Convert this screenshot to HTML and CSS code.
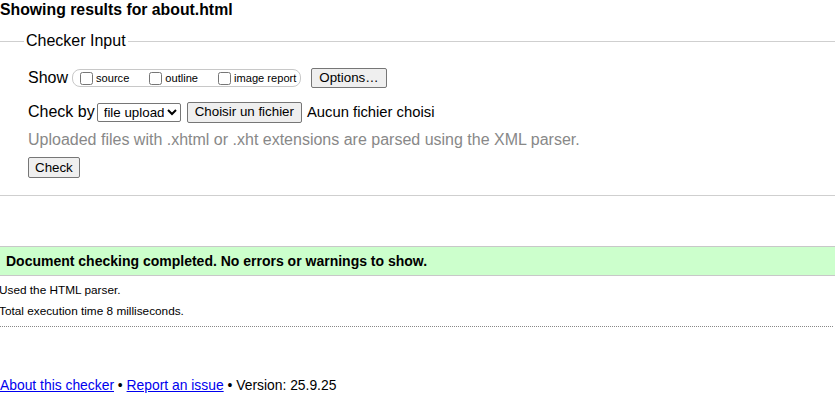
FILE: index.html
```html
<!DOCTYPE html>
<html lang="en">
<head>
<meta charset="utf-8">
<title>Showing results for about.html - Nu Html Checker</title>
<link rel="stylesheet" href="styles.css">
</head>
<body>
<h2 class="title">Showing results for about.html</h2>
<fieldset class="checker-input">
  <legend class="legend">Checker Input</legend>
  <div class="row row-show">
    <span class="label">Show</span>
    <span class="opts">
      <label class="opt"><input type="checkbox" class="cb"><span>source</span></label>
      <label class="opt"><input type="checkbox" class="cb"><span>outline</span></label>
      <label class="opt last"><input type="checkbox" class="cb"><span>image report</span></label>
    </span>
    <button type="button" class="btn btn-options">Options…</button>
  </div>
  <div class="row row-check">
    <span class="label">Check by</span>
    <select class="sel"><option>file upload</option></select>
    <button type="button" class="btn btn-file">Choisir un fichier</button>
    <span class="nofile">Aucun fichier choisi</span>
  </div>
  <p class="instruction">Uploaded files with .xhtml or .xht extensions are parsed using the XML parser.</p>
  <div class="row row-submit">
    <button type="button" class="btn btn-check">Check</button>
  </div>
</fieldset>
<div class="success">Document checking completed. No errors or warnings to show.</div>
<p class="details">Used the HTML parser.</p>
<p class="details">Total execution time 8 milliseconds.</p>
<hr class="sep">
<p class="footer"><a href="#">About this checker</a> • <a href="#">Report an issue</a> • Version: 25.9.25</p>
</body>
</html>
```
FILE: styles.css
```css
html, body {
  margin: 0;
  padding: 0;
  background: #fff;
}
body {
  font-family: "Liberation Sans", Arial, sans-serif;
  color: #000;
}
.title {
  margin: 0;
  font-size: 15.8px;
  line-height: 19px;
  font-weight: bold;
}
.checker-input {
  margin: 13px 0 0 0;
  padding: 0 0 17px 28px;
  border: 0;
  border-top: 1px solid #cfcfcf;
  border-bottom: 1px solid #cfcfcf;
  min-width: 0;
}
.legend {
  margin-left: -4px;
  padding: 0 2px;
  font-size: 16px;
  line-height: 18px;
}
.row {
  display: flex;
  align-items: center;
}
.label {
  font-size: 16px;
  line-height: 20px;
}
.row-show {
  margin-top: 18px;
  height: 20px;
}
.opts {
  display: inline-flex;
  align-items: center;
  margin-left: 4px;
  height: 16px;
  padding: 0 4px 0 7px;
  border: 1px solid #c8c8c8;
  border-radius: 8px;
}
.opt {
  display: inline-flex;
  align-items: center;
  font-size: 11.1px;
  margin-right: 20px;
}
.opt.last {
  margin-right: 0;
}
.cb {
  width: 13px;
  height: 13px;
  margin: 0 3px 0 0;
}
.btn {
  font-family: "Liberation Sans", Arial, sans-serif;
  font-size: 13.33px;
  line-height: 16px;
  color: #000;
  background: #efefef;
  border: 1px solid #767676;
  border-radius: 2px;
  padding: 1px 6px;
  margin: 0;
}
.btn-options {
  margin-left: 10px;
  height: 20px;
  padding: 1px 7px;
}
.row-check {
  margin-top: 14px;
  height: 20px;
}
.sel {
  margin-left: 2px;
  font-family: "Liberation Sans", Arial, sans-serif;
  font-size: 13.33px;
  height: 19px;
  width: 84px;
  color: #000;
  background: #fff;
  border: 1px solid #767676;
  border-radius: 2px;
  padding: 0 0 0 2px;
}
.btn-file {
  margin-left: 6px;
  height: 21px;
  padding: 1px 7px;
}
.nofile {
  margin-left: 5px;
  font-size: 14.8px;
}
.instruction {
  margin: 9px 0 0 0;
  font-size: 16px;
  line-height: 18px;
  color: #888;
}
.row-submit {
  margin-top: 8px;
}
.btn-check {
  height: 21px;
}
.success {
  margin-top: 50px;
  height: 28px;
  line-height: 28px;
  padding-left: 6px;
  background: #ccffcc;
  border-top: 1px solid #c8c8c8;
  border-bottom: 1px solid #c8c8c8;
  font-size: 14px;
  font-weight: bold;
}
.details {
  margin: 0 0 0 -1px;
  font-size: 11.8px;
  line-height: 21px;
}
.details:first-of-type {
  margin-top: 4px;
}
.sep {
  margin: 4px 2px 0 0;
  border: 0;
  border-top: 1px dotted #888;
  height: 0;
}
.footer {
  margin: 49px 0 0 0;
  font-size: 13.86px;
  line-height: 18px;
}
.footer a {
  color: #0000ee;
}
```
